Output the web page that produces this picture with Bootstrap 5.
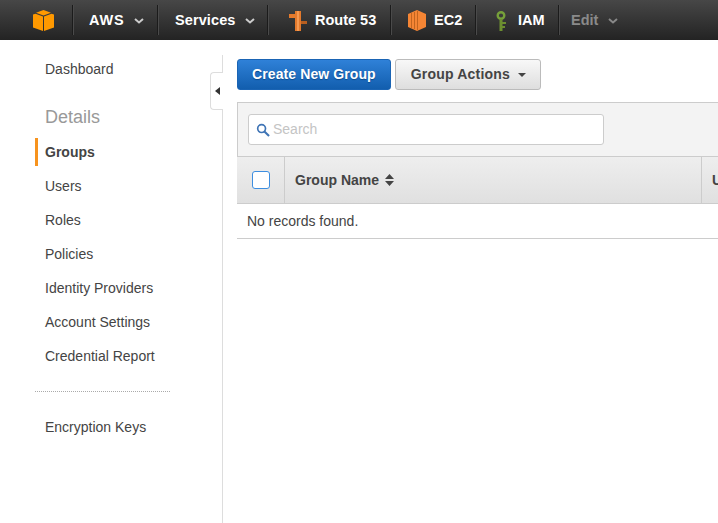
<!DOCTYPE html>
<html lang="en">
<head>
    <meta charset="UTF-8">
    <title>Groups</title>
    <link href="https://cdn.jsdelivr.net/npm/bootstrap@5.3.0/dist/css/bootstrap.min.css" rel="stylesheet">
    <style>
        html, body { height: 100%; overflow: hidden; }
        body { font-family: "Liberation Sans", Arial, sans-serif; font-size: 14px; color: #444; background: #fff; }
        .top-bar { height: 40px; background: linear-gradient(#474747, #232323); color: #fff; font-weight: 700; font-size: 14.5px; }
        .top-item { height: 30px; padding-top: 1px; border-right: 1px solid #1b1b1b; box-shadow: 1px 0 0 #4a4a4a; }
        .top-logo { width: 73px; padding-left: 33px; }
        .top-aws { width: 85px; padding-left: 16px; letter-spacing: .8px; }
        .top-services { width: 110px; padding-left: 17px; letter-spacing: .1px; }
        .top-route { width: 123px; padding-left: 21px; }
        .top-ec2 { width: 85px; padding-left: 17px; }
        .top-iam { width: 83px; padding-left: 19px; }
        .iam-label { margin-left: 11px; }
        .top-edit { padding-left: 12px; color: #8a8a8a; font-size: 14.5px; border: 0; box-shadow: none; }
        .chev { margin-left: 10px; }
        .side-panel { width: 223px; border-right: 1px solid #ddd; margin-top: 15px; position: relative; }
        .side-link { display: block; color: #444; text-decoration: none; height: 28px; line-height: 28px; margin: 0 0 6px 35px; padding-left: 10px; }
        .side-link.is-current { font-weight: 700; border-left: 3px solid #f7931e; padding-left: 7px; }
        .side-head { font-size: 18px; color: #999; margin: 20px 0 7px 45px; height: 28px; line-height: 28px; }
        .side-rule { border-top: 1px dotted #aaa; margin: 21px 52px 21px 35px; }
        .side-toggle { position: absolute; left: 210px; top: 17px; width: 13px; height: 38px; background: #fff; border: 1px solid #ddd; border-right: 0; border-radius: 4px 0 0 4px; display: flex; align-items: center; justify-content: center; }
        .side-toggle i { border: 4px solid transparent; border-right: 5px solid #333; border-left: 0; }
        .main-area { padding: 19px 0 0 14px; min-width: 0; flex: 1; }
        .act-btn { height: 31px; padding: 0 14px; font-weight: 700; font-size: 14px; letter-spacing: .1px; border-radius: 3px; }
        .btn-create { color: #fff; background: linear-gradient(#2f81d8, #125eae); border: 1px solid #1a64b4; text-shadow: 0 1px 1px #0c4a8c; }
        .btn-group-actions { color: #444; background: linear-gradient(#f8f8f8, #dedede); border: 1px solid #bbb; letter-spacing: .2px; padding-left: 15px; }
        .btn-group-actions::after { margin-left: 8px; vertical-align: 2px; }
        .grid-panel { margin-top: 12px; width: 500px; }
        .search-row { height: 55px; background: #f3f3f3; border: 1px solid #ccc; border-right: 0; padding: 11px 10px; }
        .search-box { width: 356px; height: 31px; background: #fff; border: 1px solid #ccc; border-radius: 3px; padding-left: 7px; color: #c4c4c4; gap: 3px; }
        .head-row { height: 47px; background: linear-gradient(#eee, #e0e0e0); border-bottom: 1px solid #ccc; font-weight: 700; }
        .head-check { width: 48px; height: 100%; border-right: 1px solid #ccc; }
        .fake-check { width: 18px; height: 18px; background: #fff; border: 1px solid #3d8ee0; border-radius: 3px; }
        .head-name { width: 417px; height: 100%; padding-left: 10px; border-right: 1px solid #ccc; }
        .sort-mark { margin-left: 6px; }
        .head-next { padding-left: 10px; }
        .empty-row { height: 35px; line-height: 34px; padding-left: 10px; border-bottom: 1px solid #ccc; }
    </style>
</head>
<body class="d-flex flex-column">
    <!-- Top bar -->
    <nav class="top-bar d-flex align-items-center flex-shrink-0">
        <div class="top-item top-logo d-flex align-items-center">
            <svg width="21" height="21" viewBox="0 0 21 21"><path fill="#f90" d="M10.500 0 18 2.700 10.500 5.400 3 2.700Z"/><path fill="#f90" d="M0 4.500 2.500 3.800 10 6.500V21L0 17.500Z"/><path fill="#f90" d="M21 4.500 18.500 3.800 11 6.500V21L21 17.500Z"/></svg>
        </div>
        <div class="top-item top-aws d-flex align-items-center">AWS
            <svg class="chev" width="10" height="6" viewBox="0 0 10 6"><path fill="none" stroke="#ccc" stroke-width="2" d="M1 1 5 4.500 9 1"/></svg>
        </div>
        <div class="top-item top-services d-flex align-items-center">Services
            <svg class="chev" width="10" height="6" viewBox="0 0 10 6"><path fill="none" stroke="#ccc" stroke-width="2" d="M1 1 5 4.500 9 1"/></svg>
        </div>
        <div class="top-item top-route d-flex align-items-center gap-2">
            <svg width="18" height="20" viewBox="0 0 18 20"><path fill="#e47a2c" d="M6 0h6v20H6z"/><path fill="#f59a52" d="M8 0h2v20H8z"/><path fill="#e47a2c" d="M0 3h6v4H0z"/><path fill="#b85f20" d="M12 10h6v3h-6z"/></svg>
            Route 53
        </div>
        <div class="top-item top-ec2 d-flex align-items-center gap-2">
            <svg width="18" height="21" viewBox="0 0 18 21"><path fill="#f58534" d="M0 4 9 0 18 4V17L9 21 0 17Z"/><path fill="#c2651f" d="M3 3h1v15H3zM6 2h1v17H6zM9 1h1v19H9z"/></svg>
            EC2
        </div>
        <div class="top-item top-iam d-flex align-items-center">
            <svg width="12" height="20" viewBox="0 0 12 20"><circle cx="6" cy="4.500" r="3.300" fill="none" stroke="#76a03a" stroke-width="2.400"/><path fill="#6c8e30" d="M4.500 8h3v12h-3zM7.500 11H11v2H7.500zM7.500 15H10v2H7.500z"/></svg>
            <span class="iam-label">IAM</span>
        </div>
        <div class="top-item top-edit d-flex align-items-center">Edit
            <svg class="chev" width="10" height="6" viewBox="0 0 10 6"><path fill="none" stroke="#888" stroke-width="2" d="M1 1 5 4.500 9 1"/></svg>
        </div>
    </nav>

    <div class="d-flex flex-grow-1">
        <!-- Side menu -->
        <aside class="side-panel flex-shrink-0">
            <a class="side-link" href="#">Dashboard</a>
            <div class="side-head">Details</div>
            <a class="side-link is-current" href="#">Groups</a>
            <a class="side-link" href="#">Users</a>
            <a class="side-link" href="#">Roles</a>
            <a class="side-link" href="#">Policies</a>
            <a class="side-link" href="#">Identity Providers</a>
            <a class="side-link" href="#">Account Settings</a>
            <a class="side-link" href="#">Credential Report</a>
            <div class="side-rule"></div>
            <a class="side-link" href="#">Encryption Keys</a>
            <div class="side-toggle"><i></i></div>
        </aside>

        <!-- Content -->
        <main class="main-area">
            <div class="d-flex gap-1">
                <button class="btn act-btn btn-create" type="button">Create New Group</button>
                <button class="btn act-btn btn-group-actions dropdown-toggle" type="button">Group Actions</button>
            </div>
            <div class="grid-panel">
                <div class="search-row">
                    <div class="search-box d-flex align-items-center">
                        <svg width="14" height="14" viewBox="0 0 15 15"><circle cx="6" cy="6" r="4.200" fill="none" stroke="#3f74b5" stroke-width="1.800"/><path stroke="#3f74b5" stroke-width="2.200" d="M9 9l5 5"/></svg>
                        Search
                    </div>
                </div>
                <div class="head-row d-flex align-items-center">
                    <div class="head-check d-flex align-items-center justify-content-center"><span class="fake-check"></span></div>
                    <div class="head-name d-flex align-items-center">Group Name
                        <svg class="sort-mark" width="9" height="12" viewBox="0 0 9 12"><path fill="#444" d="M4.500 0 9 5H0ZM0 7h9l-4.500 5Z"/></svg>
                    </div>
                    <div class="head-next">U</div>
                </div>
                <div class="empty-row">No records found.</div>
            </div>
        </main>
    </div>

    <script src="https://cdn.jsdelivr.net/npm/bootstrap@5.3.0/dist/js/bootstrap.bundle.min.js"></script>
</body>
</html>
